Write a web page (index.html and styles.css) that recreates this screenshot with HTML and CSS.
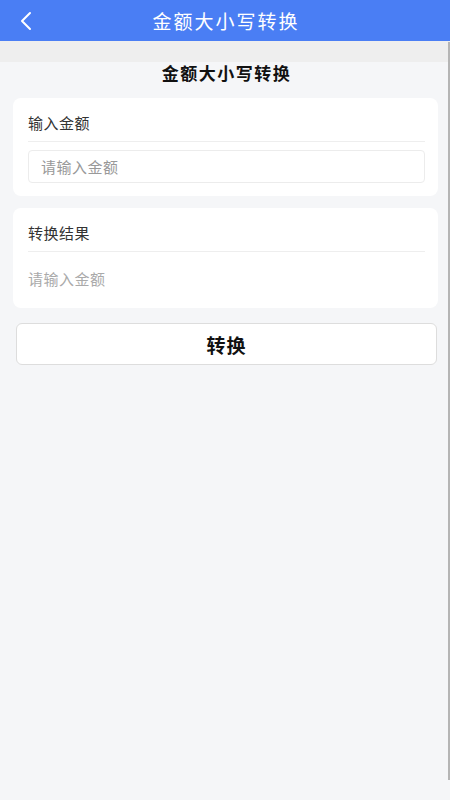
FILE: index.html
```html
<!DOCTYPE html>
<html lang="zh-CN">
<head>
<meta charset="utf-8">
<meta name="viewport" content="width=450">
<title>金额大小写转换</title>
<link rel="stylesheet" href="styles.css">
</head>
<body>
<div class="page">
  <header class="header">
    <div class="back">
      <svg width="14" height="20" viewBox="0 0 14 20"><polyline points="11,2 3,10 11,18" fill="none" stroke="#ffffff" stroke-width="2" stroke-linecap="round" stroke-linejoin="round"/></svg>
    </div>
    <div class="title">金额大小写转换</div>
    <div class="spacer"></div>
  </header>
  <div class="band"></div>
  <main class="main">
    <h1 class="subtitle">金额大小写转换</h1>
    <section class="card">
      <div class="label">输入金额</div>
      <div class="divider"></div>
      <div class="input">请输入金额</div>
    </section>
    <section class="card card-result">
      <div class="label">转换结果</div>
      <div class="divider"></div>
      <div class="result">请输入金额</div>
    </section>
    <button class="btn" type="button">转换</button>
  </main>
  <div class="scrollbar"></div>
</div>
</body>
</html>
```
FILE: styles.css
```css
html, body {
  margin: 0;
  padding: 0;
}
body {
  width: 450px;
  height: 800px;
  background: #f5f6f8;
  font-family: "Noto Sans CJK SC", "Noto Sans", sans-serif;
  overflow: hidden;
}
.page {
  position: relative;
  height: 800px;
}
.header {
  height: 41px;
  background: #4a7ef4;
  display: grid;
  grid-template-columns: 60px 1fr 60px;
  align-items: center;
}
.back {
  padding-left: 19px;
  display: flex;
  align-items: center;
  height: 41px;
}
.title {
  text-align: center;
  color: #ffffff;
  font-size: 19px;
  letter-spacing: 2px;
  line-height: 41px;
  padding-left: 2px;
}
.band {
  height: 21px;
  background: #eeeeee;
}
.main {
  padding: 0 12px 0 13px;
}
.subtitle {
  margin: 0;
  height: 22px;
  line-height: 22px;
  text-align: center;
  font-size: 17px;
  font-weight: 700;
  letter-spacing: 1.5px;
  color: #111111;
  padding-left: 2px;
}
.card {
  margin-top: 14px;
  background: #ffffff;
  border-radius: 8px;
  padding: 0 13px 13px 15px;
}
.card-result {
  margin-top: 12px;
  padding-bottom: 18px;
}
.label {
  padding-top: 14px;
  padding-bottom: 7px;
  line-height: 22px;
  font-size: 15px;
  color: #333333;
  letter-spacing: 0.5px;
}
.divider {
  height: 1px;
  background: #eeeeee;
}
.input {
  margin-top: 8px;
  height: 31px;
  border: 1px solid #ececec;
  border-radius: 4px;
  padding-left: 12px;
  line-height: 31px;
  font-size: 15px;
  color: #999999;
  letter-spacing: 0.5px;
}
.result {
  margin-top: 16px;
  line-height: 22px;
  font-size: 15px;
  color: #aaaaaa;
  letter-spacing: 0.5px;
}
.btn {
  display: block;
  box-sizing: border-box;
  margin: 15px 1px 0 3px;
  width: calc(100% - 4px);
  height: 42px;
  background: #ffffff;
  border: 1px solid #dddddd;
  border-radius: 6px;
  font-family: "Noto Sans CJK SC", "Noto Sans", sans-serif;
  font-size: 19px;
  font-weight: 700;
  color: #111111;
  letter-spacing: 1px;
  padding: 0;
}
.scrollbar {
  position: absolute;
  right: 0;
  top: 42px;
  width: 2px;
  height: 738px;
  background: #b5b5b5;
}
```
